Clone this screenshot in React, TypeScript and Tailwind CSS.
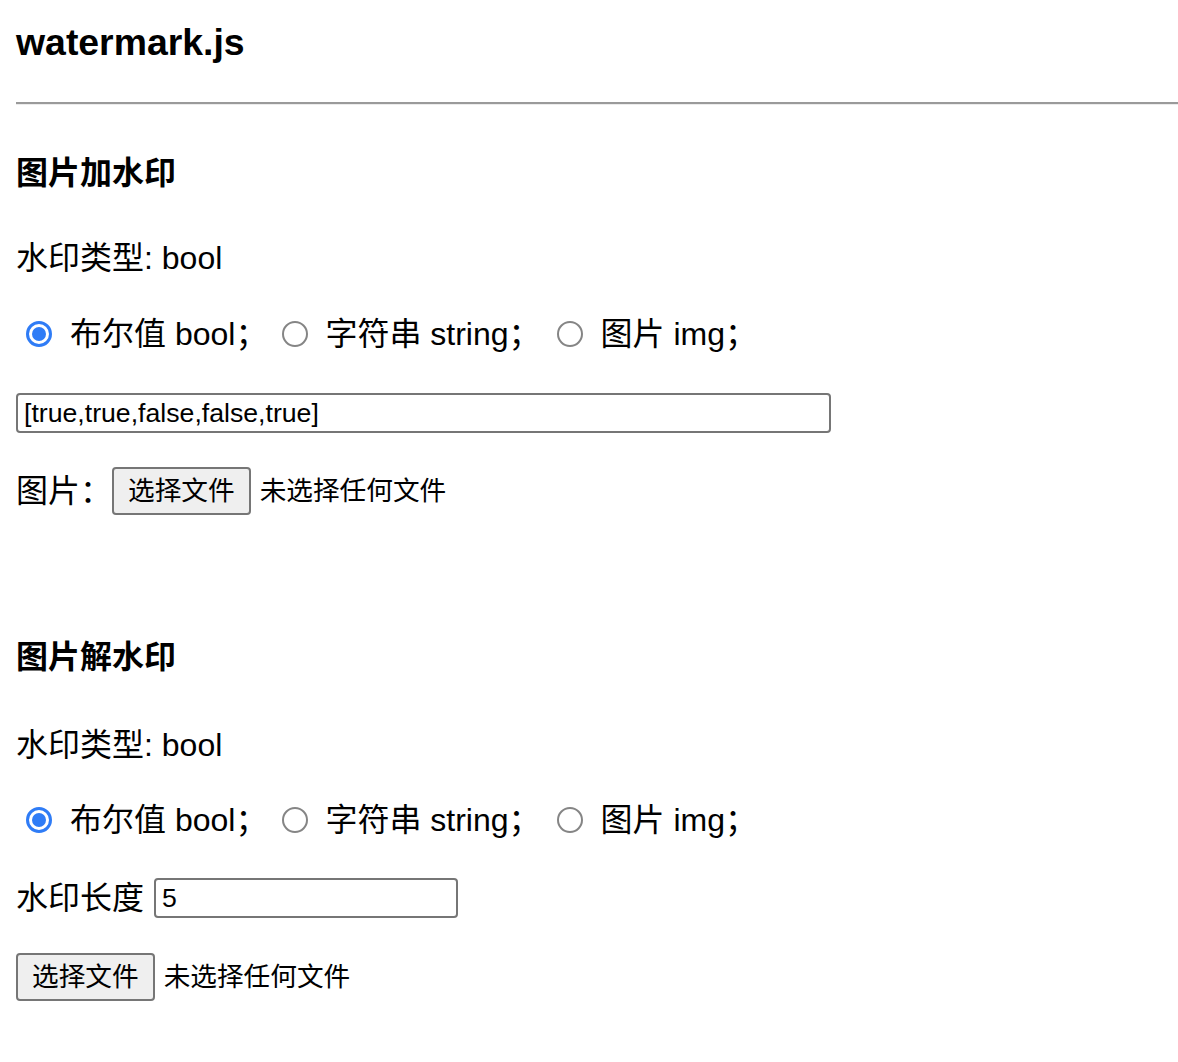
const font = { fontFamily: '"Liberation Sans", "Noto Sans CJK SC", sans-serif' };

function Radio({ checked, className = "" }: { checked?: boolean; className?: string }) {
    if (checked) {
        return (
            <span className={"flex h-[26px] w-[26px] shrink-0 items-center justify-center rounded-full border-[3px] border-[#2f7cf6] bg-white " + className}>
                <span className="h-[14px] w-[14px] rounded-full bg-[#2f7cf6]" />
            </span>
        );
    }
    return <span className={"block h-[26px] w-[26px] shrink-0 rounded-full border-2 border-[#858585] bg-white " + className} />;
}

function RadioRow({ className }: { className: string }) {
    return (
        <div className={"flex h-[40px] items-center text-[32px] leading-[40px] " + className}>
            <Radio checked className="ml-[10px]" />
            <span className="ml-[18px] whitespace-pre">{"布尔值 bool；"}</span>
            <Radio className="ml-[15px]" />
            <span className="ml-[17px] whitespace-pre">{"字符串 string；"}</span>
            <Radio className="ml-[16px]" />
            <span className="ml-[18px] whitespace-pre">{"图片 img；"}</span>
        </div>
    );
}

function FileButton() {
    return (
        <div className="flex h-[48px] items-center">
            <button className="h-[48px] rounded-[4px] border-2 border-[#767676] bg-[#efefef] px-[14px] text-[26.67px] leading-[40px]">
                {"选择文件"}
            </button>
            <span className="ml-[9px] text-[26.67px] leading-[40px]">{"未选择任何文件"}</span>
        </div>
    );
}

export default function App() {
    return (
        <div className="min-h-screen bg-white pl-4 pt-[20px] text-black" style={font}>
            <h3 className="h-[44px] text-[37.4px] font-bold leading-[44px]">{"watermark.js"}</h3>
            <div className="mt-[38px] h-[3px] border-t-2 border-b border-t-[#9a9a9a] border-b-[#ececec]" />

            <h4 className="mt-[48px] text-[32px] font-bold leading-[40px]">{"图片加水印"}</h4>
            <p className="mt-[45px] text-[32px] leading-[40px]">{"水印类型: bool"}</p>
            <RadioRow className="mt-[36px]" />
            <input
                readOnly
                value="[true,true,false,false,true]"
                className="mt-[39px] block h-[40px] w-[815px] rounded-[4px] border-2 border-[#767676] px-[6px] text-[26.67px] leading-[36px] outline-none"
            />
            <div className="mt-[34px] flex h-[48px] items-center">
                <span className="text-[32px] leading-[40px]">{"图片："}</span>
                <FileButton />
            </div>

            <h4 className="mt-[122px] text-[32px] font-bold leading-[40px]">{"图片解水印"}</h4>
            <p className="mt-[48px] text-[32px] leading-[40px]">{"水印类型: bool"}</p>
            <RadioRow className="mt-[35px]" />
            <div className="mt-[38px] flex h-[40px] items-center">
                <span className="text-[32px] leading-[40px]">{"水印长度"}</span>
                <input
                    readOnly
                    value="5"
                    className="ml-[10px] block h-[40px] w-[304px] rounded-[4px] border-2 border-[#767676] px-[6px] text-[26.67px] leading-[36px] outline-none"
                />
            </div>
            <div className="mt-[35px] pb-10">
                <FileButton />
            </div>
        </div>
    );
}
